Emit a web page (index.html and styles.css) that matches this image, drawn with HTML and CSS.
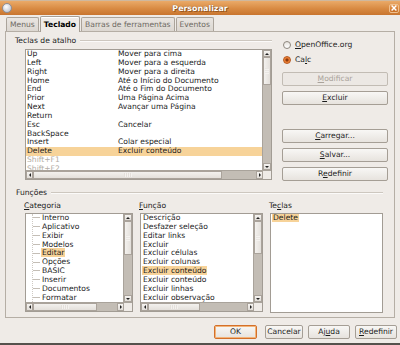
FILE: index.html
```html
<!DOCTYPE html>
<html lang="pt-BR">
<head>
    <meta charset="UTF-8">
    <title>Personalizar</title>
    <link rel="stylesheet" href="styles.css">
</head>
<body>
<div class="window">
    <div class="titlebar">
        <span class="win-icon"></span>
        <span class="title">Personalizar</span>
        <span class="close">
            <svg width="6" height="6" viewBox="0 0 6 6"><path d="M0.6 0.6L5.4 5.4M5.4 0.6L0.6 5.4" stroke="#fff" stroke-width="1.4"/></svg>
        </span>
    </div>

    <div class="main">
        <div class="tabs">
            <div class="tab">Menus</div>
            <div class="tab active">Teclado</div>
            <div class="tab">Barras de ferramentas</div>
            <div class="tab">Eventos</div>
        </div>

        <div class="notebook">
            <div class="shortcuts">
                <div class="frame">
                    <div class="frame-head"><span>Teclas de atalho</span><span class="rule"></span></div>
                    <div class="listbox keys">
                        <div class="list-body">
                            <div class="rows">
                                <div class="row"><span class="key">Up</span><span>Mover para cima</span></div>
                                <div class="row"><span class="key">Left</span><span>Mover para a esquerda</span></div>
                                <div class="row"><span class="key">Right</span><span>Mover para a direita</span></div>
                                <div class="row"><span class="key">Home</span><span>Até o Início do Documento</span></div>
                                <div class="row"><span class="key">End</span><span>Até o Fim do Documento</span></div>
                                <div class="row"><span class="key">Prior</span><span>Uma Página Acima</span></div>
                                <div class="row"><span class="key">Next</span><span>Avançar uma Página</span></div>
                                <div class="row"><span class="key">Return</span><span></span></div>
                                <div class="row"><span class="key">Esc</span><span>Cancelar</span></div>
                                <div class="row"><span class="key">BackSpace</span><span></span></div>
                                <div class="row"><span class="key">Insert</span><span>Colar especial</span></div>
                                <div class="row selected"><span class="key">Delete</span><span>Excluir conteúdo</span></div>
                                <div class="row disabled"><span class="key">Shift+F1</span><span></span></div>
                                <div class="row disabled"><span class="key">Shift+F2</span><span></span></div>
                            </div>
                            <div class="vscroll">
                                <span class="sb-btn"><i class="arr up"></i></span>
                                <span class="thumb"></span>
                                <span class="trough"></span>
                                <span class="sb-btn"><i class="arr down"></i></span>
                            </div>
                        </div>
                        <div class="hscroll">
                            <span class="sb-btn"><i class="arr left"></i></span>
                            <span class="thumb"></span>
                            <span class="trough"></span>
                            <span class="sb-btn"><i class="arr right"></i></span>
                            <span class="corner"></span>
                        </div>
                    </div>
                </div>

                <div class="side">
                    <label class="radio"><span class="dot"></span><span><u>O</u>penOffice.org</span></label>
                    <label class="radio"><span class="dot on"></span><span>Ca<u>l</u>c</span></label>
                    <div class="btn disabled first"><u>M</u>odificar</div>
                    <div class="btn"><u>E</u>xcluir</div>
                    <div class="btn gap"><u>C</u>arregar...</div>
                    <div class="btn"><u>S</u>alvar...</div>
                    <div class="btn">R<u>e</u>definir</div>
                </div>
            </div>

            <div class="functions">
                <div class="frame-head"><span>Funções</span><span class="rule"></span></div>
                <div class="columns">
                    <div class="col cat">
                        <div class="col-label"><u>C</u>ategoria</div>
                        <div class="listbox">
                            <div class="list-body">
                                <div class="rows tree">
                                    <div class="row">Interno</div>
                                    <div class="row">Aplicativo</div>
                                    <div class="row">Exibir</div>
                                    <div class="row">Modelos</div>
                                    <div class="row"><span class="sel">Editar</span></div>
                                    <div class="row">Opções</div>
                                    <div class="row">BASIC</div>
                                    <div class="row">Inserir</div>
                                    <div class="row">Documentos</div>
                                    <div class="row">Formatar</div>
                                    <div class="row">Janela</div>
                                </div>
                                <div class="vscroll">
                                    <span class="sb-btn"><i class="arr up"></i></span>
                                    <span class="thumb"></span>
                                    <span class="trough"></span>
                                    <span class="sb-btn"><i class="arr down"></i></span>
                                </div>
                            </div>
                            <div class="hscroll">
                                <span class="sb-btn"><i class="arr left"></i></span>
                                <span class="thumb"></span>
                                <span class="trough"></span>
                                <span class="sb-btn"><i class="arr right"></i></span>
                                <span class="corner"></span>
                            </div>
                        </div>
                    </div>

                    <div class="col func">
                        <div class="col-label"><u>F</u>unção</div>
                        <div class="listbox">
                            <div class="list-body">
                                <div class="rows plain">
                                    <div class="row">Descrição</div>
                                    <div class="row">Desfazer seleção</div>
                                    <div class="row">Editar links</div>
                                    <div class="row">Excluir</div>
                                    <div class="row">Excluir células</div>
                                    <div class="row">Excluir colunas</div>
                                    <div class="row"><span class="sel">Excluir conteúdo</span></div>
                                    <div class="row">Excluir conteúdo</div>
                                    <div class="row">Excluir linhas</div>
                                    <div class="row">Excluir observação</div>
                                    <div class="row">Excluir página</div>
                                </div>
                                <div class="vscroll">
                                    <span class="sb-btn"><i class="arr up"></i></span>
                                    <span class="thumb"></span>
                                    <span class="trough"></span>
                                    <span class="sb-btn"><i class="arr down"></i></span>
                                </div>
                            </div>
                            <div class="hscroll">
                                <span class="sb-btn"><i class="arr left"></i></span>
                                <span class="thumb"></span>
                                <span class="trough"></span>
                                <span class="sb-btn"><i class="arr right"></i></span>
                                <span class="corner"></span>
                            </div>
                        </div>
                    </div>

                    <div class="col keyscol">
                        <div class="col-label">Te<u>c</u>las</div>
                        <div class="listbox white">
                            <div class="rows plain">
                                <div class="row"><span class="sel">Delete</span></div>
                            </div>
                        </div>
                    </div>
                </div>
            </div>
        </div>

        <div class="actions">
            <div class="btn default">OK</div>
            <div class="btn">Cancelar</div>
            <div class="btn">Aj<u>u</u>da</div>
            <div class="btn"><u>R</u>edefinir</div>
        </div>
    </div>
</div>
</body>
</html>
```

FILE: styles.css
```css
body {
    margin: 0;
    width: 400px;
    height: 345px;
    overflow: hidden;
    background: #efebe7;
    font-family: "DejaVu Sans", sans-serif;
    font-size: 7.6px;
    color: #1c1c1c;
}
u {
    text-decoration: underline;
    text-underline-offset: 1px;
}
.window {
    height: 343px;
    border-bottom: 2px solid #55514c;
}

/* title bar */
.titlebar {
    height: 15px;
    box-sizing: border-box;
    border-top: 1px solid #cfb89e;
    background: linear-gradient(#eaaa68, #d88a42 55%, #c8752f);
    display: flex;
    align-items: center;
    padding: 0 1px 0 2px;
}
.win-icon {
    width: 8px;
    height: 8px;
    border-radius: 50%;
    border: 1px solid #8c8f98;
    background: radial-gradient(circle at 40% 35%, #ffffff, #c9ccd4 70%, #9ea3ad);
}
.title {
    flex: 1;
    text-align: center;
    color: #fff;
    font-weight: bold;
    font-size: 7.9px;
    text-shadow: 0 0 1px #7a4416, 1px 1px 0 #9b5a22;
    margin-left: -1px;
}
.close {
    width: 10px;
    height: 9px;
    box-sizing: border-box;
    border: 1px solid #f0c08e;
    border-radius: 2px;
    background: linear-gradient(#e59a52, #c96f26);
    display: flex;
    align-items: center;
    justify-content: center;
}

/* tabs */
.main {
    padding: 1px 5px 0 5px;
}
.tabs {
    display: flex;
    align-items: flex-end;
    height: 15px;
    margin-left: 1px;
}
.tab {
    height: 14px;
    box-sizing: border-box;
    padding: 0 3px;
    line-height: 13px;
    border: 1px solid #aba49b;
    border-bottom: none;
    border-radius: 2px 2px 0 0;
    background: linear-gradient(#e9e5e1, #dcd7d1);
    color: #6e6962;
    margin-right: 1px;
}
.tab.active {
    height: 16px;
    line-height: 15px;
    background: #efebe7;
    color: #000;
    font-weight: bold;
    position: relative;
    margin-bottom: -1px;
    border-color: #a59e95;
    box-shadow: inset 0 1px 0 #fff;
}
.notebook {
    height: 287px;
    box-sizing: border-box;
    border: 1px solid #b5aea5;
    padding: 4px 6px 0 9px;
}

/* frames */
.frame-head {
    display: flex;
    align-items: center;
    height: 9px;
    line-height: 9px;
}
.rule {
    flex: 1;
    border-top: 1px solid #cdc7bf;
    border-bottom: 1px solid #fbfaf9;
    margin-left: 4px;
}
.shortcuts {
    display: flex;
}
.frame {
    width: 257px;
}

/* list boxes */
.listbox {
    box-sizing: border-box;
    border: 1px solid #a29c94;
    background: #fff;
    display: flex;
    flex-direction: column;
}
.listbox.keys {
    margin: 4px 0 0 10px;
    width: 247px;
    height: 131px;
}
.list-body {
    flex: 1;
    display: flex;
    overflow: hidden;
}
.rows {
    flex: 1;
    overflow: hidden;
}
.row {
    height: 8.85px;
    line-height: 8.85px;
    white-space: nowrap;
}
.keys .row {
    display: flex;
    padding-left: 1px;
}
.key {
    width: 91px;
}
.row.selected {
    background: #f7d399;
}
.row.disabled {
    color: #b3ada5;
}
.sel {
    background: #f7d399;
    padding: 0 1px;
    margin-left: -1px;
}

/* scrollbars */
.vscroll {
    width: 8px;
    display: flex;
    flex-direction: column;
    background: #c3bdb5;
    border-left: 1px solid #a9a39b;
}
.hscroll {
    height: 8px;
    display: flex;
    background: #c3bdb5;
    border-top: 1px solid #a9a39b;
}
.sb-btn {
    flex: none;
    width: 8px;
    height: 7px;
    box-sizing: border-box;
    background: linear-gradient(#f6f4f1, #e1ddd8);
    border: 1px solid #aaa39b;
    display: flex;
    align-items: center;
    justify-content: center;
}
.hscroll .sb-btn {
    width: 7px;
    height: 8px;
}
.arr {
    width: 0;
    height: 0;
    border: 2px solid transparent;
}
.arr.up { border-bottom-color: #222; border-top-width: 0; }
.arr.down { border-top-color: #222; border-bottom-width: 0; }
.arr.left { border-right-color: #222; border-left-width: 0; }
.arr.right { border-left-color: #222; border-right-width: 0; }
.thumb {
    flex: none;
    box-sizing: border-box;
    background: linear-gradient(90deg, #f3f1ee, #e4e0db);
    border: 1px solid #aaa39b;
}
.vscroll .thumb {
    background: repeating-linear-gradient(#e9e6e2 0 1px, #f4f2ef 1px 2px) center / 4px 6px no-repeat,
                linear-gradient(90deg, #f3f1ee, #e4e0db);
}
.hscroll .thumb {
    background: repeating-linear-gradient(90deg, #e4e0db 0 1px, #f4f2ef 1px 2px) center / 8px 4px no-repeat,
                linear-gradient(#f3f1ee, #e4e0db);
}
.trough {
    flex: 1;
}
.corner {
    width: 8px;
    flex: none;
    background: #efebe7;
}
.keys .vscroll .thumb { height: 28px; }
.keys .hscroll .thumb { width: 189px; }
.cat .vscroll .thumb { height: 34px; }
.cat .hscroll .thumb { width: 64px; }
.func .vscroll .thumb { height: 33px; }
.func .hscroll .thumb { width: 52px; }

/* side column */
.side {
    width: 106px;
    margin-left: 10px;
    padding-top: 1px;
    display: flex;
    flex-direction: column;
}
.radio {
    height: 15px;
    display: flex;
    align-items: center;
}
.dot {
    width: 8px;
    height: 8px;
    box-sizing: border-box;
    border-radius: 50%;
    border: 1px solid #8e877e;
    background: linear-gradient(#e6e2dd, #fff);
    margin: 0 4px 0 1px;
}
.dot.on {
    border-color: #b6561b;
    background: radial-gradient(circle, #8a3a0e 0 1.3px, #e9772c 1.8px, #f09a55);
}
.btn {
    height: 14px;
    box-sizing: border-box;
    border: 1px solid #a59e95;
    border-radius: 2px;
    background: linear-gradient(#f8f7f5, #e7e3de);
    text-align: center;
    line-height: 12px;
    white-space: nowrap;
}
.side .btn {
    margin-top: 5px;
}
.side .btn.first {
    margin-top: 5px;
}
.side .btn.gap {
    margin-top: 24px;
}
.btn.disabled {
    color: #aaa39b;
    background: #ece8e4;
    border-color: #c2bcb4;
}

/* functions */
.functions {
    margin: 7px 5px 0 1px;
}
.columns {
    display: flex;
    gap: 7px;
    margin: 4px 0 0 9px;
}
.col-label {
    height: 9px;
    line-height: 9px;
    margin-left: -1px;
    margin-bottom: 3px;
}
.cat { width: 108px; }
.func { width: 123px; }
.keyscol { width: 113px; }
.cat .listbox, .func .listbox {
    height: 99px;
}
.listbox.white {
    height: 100px;
    display: block;
}
.tree {
    margin-left: 6px;
    border-left: 1px dotted #cfcac3;
}
.tree .row::before {
    content: "";
    display: inline-block;
    width: 7px;
    border-top: 1px solid #c4beb6;
    vertical-align: middle;
    margin-right: 2px;
}
.plain .row {
    padding-left: 2px;
}

/* bottom buttons */
.actions {
    display: flex;
    justify-content: flex-end;
    gap: 5px;
    margin-top: 7px;
    padding-right: -2px;
    margin-right: -2px;
}
.actions .btn:nth-child(1) { width: 43px; margin-right: 3px; }
.actions .btn:nth-child(2) { width: 38px; }
.actions .btn:nth-child(3) { width: 42px; }
.actions .btn:nth-child(4) { width: 42px; }
.btn.default {
    border-color: #d4702a;
    box-shadow: inset 0 0 0 1px #f2b47a;
}
```
